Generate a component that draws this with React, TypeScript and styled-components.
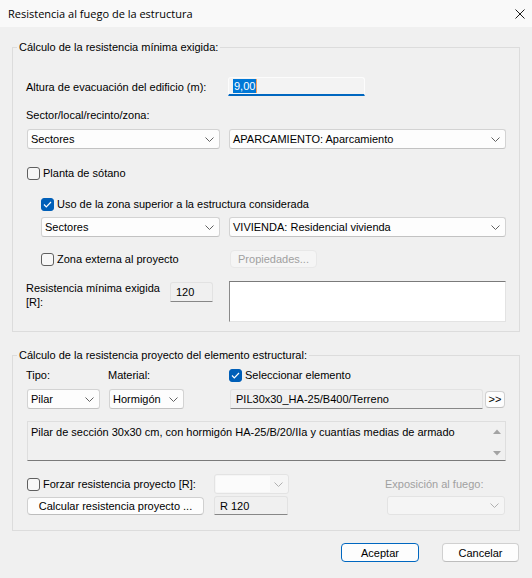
import React from "react";
import styled, { createGlobalStyle } from "styled-components";

const GlobalStyle = createGlobalStyle`
  html, body { margin: 0; padding: 0; background: #f0f0f0; }
  body { font-family: "Liberation Sans", Arial, sans-serif; font-size: 11px; color: #000; }
  * { box-sizing: border-box; }
`;

const Window = styled.div`
  width: 532px;
  height: 578px;
  display: flex;
  flex-direction: column;
  background: #f0f0f0;
  overflow: hidden;
`;

const TitleBar = styled.div`
  height: 27px;
  flex: none;
  display: flex;
  align-items: center;
  justify-content: space-between;
  padding: 0 7px 0 8px;
  background: #f9f9f9;
`;

const TitleText = styled.span`
  font-family: "Open Sans", "Liberation Sans", sans-serif;
  font-size: 11px;
  line-height: 16px;
`;

const CloseIcon = styled.svg`
  width: 10px;
  height: 10px;
`;

const Body = styled.div`
  display: flex;
  flex-direction: column;
  padding: 12px 12px 0 12px;
`;

const Group = styled.fieldset<{ $mt?: number }>`
  margin: ${(p) => p.$mt ?? 0}px 0 0 0;
  padding: 0;
  min-width: 0;
  border: 1px solid #dcdcdc;
`;

const Legend = styled.legend`
  margin-left: 4px;
  padding: 0 2px;
  line-height: 16px;
`;

const GroupContent = styled.div<{ $pt: number; $pb: number }>`
  display: flex;
  flex-direction: column;
  padding: ${(p) => p.$pt}px 13px ${(p) => p.$pb}px 14px;
`;

const Row = styled.div<{ $mt?: number; $h?: number; $indent?: number }>`
  display: flex;
  align-items: center;
  margin-top: ${(p) => p.$mt ?? 0}px;
  height: ${(p) => (p.$h ? `${p.$h}px` : "auto")};
  padding-left: ${(p) => p.$indent ?? 0}px;
`;

const GridRow = styled.div<{ $mt?: number; $cols: string; $gap?: number; $indent?: number }>`
  display: grid;
  grid-template-columns: ${(p) => p.$cols};
  column-gap: ${(p) => p.$gap ?? 0}px;
  align-items: start;
  margin-top: ${(p) => p.$mt ?? 0}px;
  padding-left: ${(p) => p.$indent ?? 0}px;
`;

const Label = styled.span<{ $w?: number; $disabled?: boolean; $ml?: number }>`
  display: block;
  line-height: 16px;
  white-space: nowrap;
  margin-left: ${(p) => p.$ml ?? -1}px;
  width: ${(p) => (p.$w ? `${p.$w}px` : "auto")};
  color: ${(p) => (p.$disabled ? "#a0a0a0" : "#000")};
`;

const TwoLineLabel = styled.span`
  display: block;
  line-height: 14px;
  margin-left: -1px;
`;

const EditBox = styled.div`
  width: 137px;
  height: 19px;
  display: flex;
  align-items: center;
  padding-left: 4px;
  background: #f3f3f3;
  border: 1px solid #fcfcfc;
  border-bottom: 2px solid #0067c0;
  border-radius: 3px 3px 0 0;
`;

const Selected = styled.span`
  background: #0078d7;
  color: #fff;
  line-height: 14px;
  padding: 0 1px;
  border-right: 1px solid #f7a35c;
`;

const Select = styled.div<{ $w?: number; $h?: number; $disabled?: boolean }>`
  width: ${(p) => (p.$w ? `${p.$w}px` : "100%")};
  height: ${(p) => p.$h ?? 20}px;
  display: flex;
  align-items: center;
  justify-content: space-between;
  padding: 0 5px 0 3px;
  background: ${(p) => (p.$disabled ? "#f5f5f5" : "#fdfdfd")};
  border: 1px solid ${(p) => (p.$disabled ? "#e3e3e3" : "#d3d3d3")};
  border-bottom-color: ${(p) => (p.$disabled ? "#e3e3e3" : "#c2c2c2")};
  border-radius: 3px;
  white-space: nowrap;
  overflow: hidden;
`;

const SelectInner = styled.span`
  flex: 1;
  align-self: stretch;
  margin: 1px 4px 1px -2px;
  background: #fbfbfb;
`;

const Chevron = ({ color = "#606060" }: { color?: string }) => (
  <svg width="9" height="5" viewBox="0 0 9 5" style={{ flex: "none" }}>
    <polyline points="0.5,0.5 4.5,4.5 8.5,0.5" fill="none" stroke={color} strokeWidth="1" />
  </svg>
);

const CheckBoxBox = styled.span<{ $checked?: boolean }>`
  width: 13px;
  height: 13px;
  flex: none;
  display: flex;
  align-items: center;
  justify-content: center;
  border-radius: 3px;
  background: ${(p) => (p.$checked ? "#005fb8" : "#f7f7f7")};
  border: 1px solid ${(p) => (p.$checked ? "#005fb8" : "#5f5f5f")};
`;

const CheckLabel = styled.span`
  margin-left: 3px;
  line-height: 16px;
  white-space: nowrap;
`;

const CheckWrap = styled.div`
  display: flex;
  align-items: center;
  height: 16px;
`;

const CheckBox = ({ checked, children }: { checked?: boolean; children: React.ReactNode }) => (
  <CheckWrap>
    <CheckBoxBox $checked={checked}>
      {checked && (
        <svg width="9" height="7" viewBox="0 0 9 7">
          <polyline points="1,3.5 3.3,5.8 8,1" fill="none" stroke="#fff" strokeWidth="1.2" />
        </svg>
      )}
    </CheckBoxBox>
    <CheckLabel>{children}</CheckLabel>
  </CheckWrap>
);

const Button = styled.div<{ $w: number; $h?: number; $default?: boolean; $disabled?: boolean; $ml?: number }>`
  width: ${(p) => p.$w}px;
  height: ${(p) => p.$h ?? 19}px;
  margin-left: ${(p) => p.$ml ?? 0}px;
  display: flex;
  align-items: center;
  justify-content: center;
  white-space: nowrap;
  border-radius: 4px;
  background: ${(p) => (p.$disabled ? "#f5f5f5" : "#fdfdfd")};
  border: 1px solid ${(p) => (p.$default ? "#0067c0" : p.$disabled ? "#e8e8e8" : "#d0d0d0")};
  border-bottom-color: ${(p) => (p.$default ? "#0067c0" : p.$disabled ? "#e8e8e8" : "#bdbdbd")};
  color: ${(p) => (p.$disabled ? "#a0a0a0" : "#000")};
`;

const ReadField = styled.div<{ $w?: number; $h?: number; $ml?: number; $mt?: number }>`
  width: ${(p) => (p.$w ? `${p.$w}px` : "100%")};
  height: ${(p) => p.$h ?? 20}px;
  margin-left: ${(p) => p.$ml ?? 0}px;
  margin-top: ${(p) => p.$mt ?? 0}px;
  display: flex;
  align-items: center;
  padding-left: 5px;
  background: #f0f0f0;
  border: 1px solid #e2e2e2;
  border-bottom-color: #878787;
  border-radius: 3px 3px 0 0;
  white-space: nowrap;
  overflow: hidden;
`;

const WhiteBox = styled.div`
  width: 277px;
  height: 41px;
  background: #fff;
  border: 1px solid #e3e3e3;
  border-top-color: #7a7a7a;
  border-left-color: #8a8a8a;
`;

const DescBox = styled.div`
  margin-top: 12px;
  height: 40px;
  display: flex;
  background: #f0f0f0;
  border: 1px solid #dedede;
  border-bottom-color: #7a7a7a;
`;

const DescText = styled.div`
  flex: 1;
  padding: 2px 3px;
  line-height: 16px;
  white-space: nowrap;
  overflow: hidden;
`;

const ScrollCol = styled.div`
  width: 17px;
  display: flex;
  flex-direction: column;
  align-items: center;
  justify-content: space-between;
  padding: 7px 0 4px 0;
`;

const Arrow = ({ up }: { up?: boolean }) => (
  <svg width="8" height="5" viewBox="0 0 8 5">
    <polygon points={up ? "0,5 4,0.5 8,5" : "0,0 8,0 4,4.5"} fill="#a3a3a3" />
  </svg>
);

const BottomGrid = styled.div`
  display: grid;
  grid-template-columns: 187px 75px 98px 118px;
  grid-template-rows: 20px 19px;
  row-gap: 2px;
  margin-top: 13px;
  align-items: center;
`;

const Footer = styled.div`
  display: flex;
  justify-content: flex-end;
  gap: 23px;
  margin-top: 12px;
  padding-right: 1px;
`;

export default function App() {
  return (
    <Window>
      <GlobalStyle />
      <TitleBar>
        <TitleText>Resistencia al fuego de la estructura</TitleText>
        <CloseIcon viewBox="0 0 10 10">
          <path d="M0.5 0.5 L9.5 9.5 M9.5 0.5 L0.5 9.5" stroke="#1a1a1a" strokeWidth="1" fill="none" />
        </CloseIcon>
      </TitleBar>
      <Body>
        <Group>
          <Legend>Cálculo de la resistencia mínima exigida:</Legend>
          <GroupContent $pt={22} $pb={9}>
            <Row $h={19}>
              <Label $w={202}>Altura de evacuación del edificio (m):</Label>
              <EditBox>
                <Selected>9,00</Selected>
              </EditBox>
            </Row>
            <Row $mt={11}>
              <Label>Sector/local/recinto/zona:</Label>
            </Row>
            <GridRow $mt={6} $cols="193px 277px" $gap={9}>
              <Select>
                <span>Sectores</span>
                <Chevron />
              </Select>
              <Select>
                <span>APARCAMIENTO: Aparcamiento</span>
                <Chevron />
              </Select>
            </GridRow>
            <Row $mt={16}>
              <CheckBox>Planta de sótano</CheckBox>
            </Row>
            <Row $mt={15} $indent={14}>
              <CheckBox checked>Uso de la zona superior a la estructura considerada</CheckBox>
            </Row>
            <GridRow $mt={5} $cols="179px 277px" $gap={9} $indent={14}>
              <Select>
                <span>Sectores</span>
                <Chevron />
              </Select>
              <Select>
                <span>VIVIENDA: Residencial vivienda</span>
                <Chevron />
              </Select>
            </GridRow>
            <GridRow $mt={13} $cols="188px auto" $indent={14}>
              <Row $h={18}>
                <CheckBox>Zona externa al proyecto</CheckBox>
              </Row>
              <Button $w={87} $h={18} $ml={1} $disabled>
                Propiedades...
              </Button>
            </GridRow>
            <GridRow $mt={13} $cols="143px 59px 277px" $gap={0}>
              <TwoLineLabel>
                Resistencia mínima exigida
                <br />
                [R]:
              </TwoLineLabel>
              <ReadField $w={43} $mt={1}>
                120
              </ReadField>
              <WhiteBox />
            </GridRow>
          </GroupContent>
        </Group>

        <Group $mt={15}>
          <Legend>Cálculo de la resistencia proyecto del elemento estructural:</Legend>
          <GroupContent $pt={4} $pb={15}>
            <GridRow $cols="82px 120px 1fr">
              <Label>Tipo:</Label>
              <Label>Material:</Label>
              <CheckBox checked>Seleccionar elemento</CheckBox>
            </GridRow>
            <GridRow $mt={6} $cols="82px 120px 1fr">
              <Select $w={73}>
                <span>Pilar</span>
                <Chevron />
              </Select>
              <Select $w={75}>
                <span>Hormigón</span>
                <Chevron />
              </Select>
              <Row>
                <ReadField $w={253} $ml={1}>
                  PIL30x30_HA-25/B400/Terreno
                </ReadField>
                <Button $w={20} $h={17} $ml={2}>
                  &gt;&gt;
                </Button>
              </Row>
            </GridRow>
            <DescBox>
              <DescText>
                Pilar de sección 30x30 cm, con hormigón HA-25/B/20/IIa y cuantías medias de armado
              </DescText>
              <ScrollCol>
                <Arrow up />
                <Arrow />
              </ScrollCol>
            </DescBox>
            <BottomGrid>
              <CheckBox>Forzar resistencia proyecto [R]:</CheckBox>
              <Select $w={75} $disabled>
                <SelectInner />
                <Chevron color="#b0b0b0" />
              </Select>
              <span />
              <Label $disabled $ml={-2}>
                Exposición al fuego:
              </Label>
              <Button $w={177} $h={18}>
                Calcular resistencia proyecto ...
              </Button>
              <ReadField $w={74} $h={19}>
                R 120
              </ReadField>
              <span />
              <Select $w={118} $h={19} $disabled>
                <span />
                <Chevron color="#b0b0b0" />
              </Select>
            </BottomGrid>
          </GroupContent>
        </Group>

        <Footer>
          <Button $w={78} $default>
            Aceptar
          </Button>
          <Button $w={77}>Cancelar</Button>
        </Footer>
      </Body>
    </Window>
  );
}
